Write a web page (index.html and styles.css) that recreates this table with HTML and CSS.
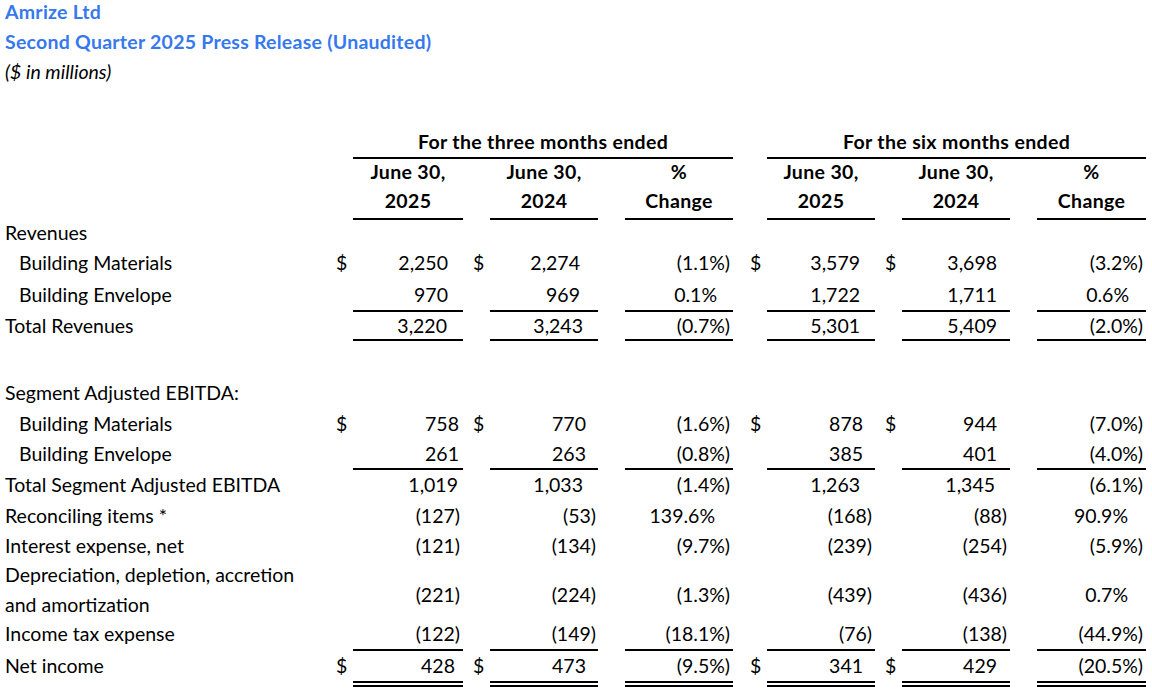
FILE: index.html
```html
<!DOCTYPE html>
<html lang="en">
<head>
<meta charset="utf-8">
<title>Amrize Ltd – Second Quarter 2025</title>
<link rel="stylesheet" href="styles.css">
</head>
<body>
<div class="titles">
  <div class="title">Amrize Ltd</div>
  <div class="title">Second Quarter 2025 Press Release (Unaudited)</div>
  <div class="note">($ in millions)</div>
</div>
<table class="fin">
  <colgroup>
    <col class="c-label"><col class="c-cur"><col class="c-a"><col class="c-cur"><col class="c-v"><col class="c-cur"><col class="c-v"><col class="c-cur3"><col class="c-v"><col class="c-cur"><col class="c-v"><col class="c-cur"><col class="c-f">
  </colgroup>
  <thead>
    <tr class="ul h-1">
      <td></td><td></td><th colspan="5" class="v grp">For the three months ended</th><td></td><th colspan="5" class="v grp">For the six months ended</th>
    </tr>
    <tr class="h-2">
      <td></td><td></td><th>June 30,</th><td></td><th>June 30,</th><td></td><th>%</th><td></td><th>June 30,</th><td></td><th>June 30,</th><td></td><th>%</th>
    </tr>
    <tr class="ul h-3">
      <td></td><td></td><th class="v">2025</th><td></td><th class="v">2024</th><td></td><th class="v">Change</th><td></td><th class="v">2025</th><td></td><th class="v">2024</th><td></td><th class="v">Change</th>
    </tr>
  </thead>
  <tbody>
    <tr class="r-rev">
      <td class="lbl" colspan="13">Revenues</td>
    </tr>
    <tr class="r-bm">
      <td class="lbl ind">Building Materials</td><td class="cur">$</td><td class="v r15">2,250</td><td class="cur">$</td><td class="v r18">2,274</td><td></td><td class="v r3">(1.1%)</td><td class="cur cur3">$</td><td class="v r15">3,579</td><td class="cur">$</td><td class="v r13">3,698</td><td></td><td class="v r3">(3.2%)</td>
    </tr>
    <tr class="ul r-be">
      <td class="lbl ind">Building Envelope</td><td></td><td class="v r15">970</td><td></td><td class="v r18">969</td><td></td><td class="v r16">0.1%</td><td></td><td class="v r15">1,722</td><td></td><td class="v r13">1,711</td><td></td><td class="v r17">0.6%</td>
    </tr>
    <tr class="ul r-tr">
      <td class="lbl">Total Revenues</td><td></td><td class="v r16">3,220</td><td></td><td class="v r15">3,243</td><td></td><td class="v r3">(0.7%)</td><td></td><td class="v r15">5,301</td><td></td><td class="v r13">5,409</td><td></td><td class="v r3">(2.0%)</td>
    </tr>
    <tr class="r-blank"><td colspan="13"></td></tr>
    <tr class="r-seg">
      <td class="lbl" colspan="13">Segment Adjusted EBITDA:</td>
    </tr>
    <tr class="r-sbm">
      <td class="lbl ind">Building Materials</td><td class="cur">$</td><td class="v r4">758</td><td class="cur">$</td><td class="v r12">770</td><td></td><td class="v r3">(1.6%)</td><td class="cur cur3">$</td><td class="v r12">878</td><td class="cur">$</td><td class="v r13">944</td><td></td><td class="v r3">(7.0%)</td>
    </tr>
    <tr class="ul r-sbe">
      <td class="lbl ind">Building Envelope</td><td></td><td class="v r4">261</td><td></td><td class="v r12">263</td><td></td><td class="v r3">(0.8%)</td><td></td><td class="v r12">385</td><td></td><td class="v r13">401</td><td></td><td class="v r3">(4.0%)</td>
    </tr>
    <tr class="r-tot">
      <td class="lbl">Total Segment Adjusted EBITDA</td><td></td><td class="v r5">1,019</td><td></td><td class="v r15">1,033</td><td></td><td class="v r3">(1.4%)</td><td></td><td class="v r15">1,263</td><td></td><td class="v r15">1,345</td><td></td><td class="v r3">(6.1%)</td>
    </tr>
    <tr class="r-rec">
      <td class="lbl">Reconciling items *</td><td></td><td class="v r3">(127)</td><td></td><td class="v r2">(53)</td><td></td><td class="v r18">139.6%</td><td></td><td class="v r3">(168)</td><td></td><td class="v r3">(88)</td><td></td><td class="v r18">90.9%</td>
    </tr>
    <tr class="r-int">
      <td class="lbl">Interest expense, net</td><td></td><td class="v r3">(121)</td><td></td><td class="v r2">(134)</td><td></td><td class="v r3">(9.7%)</td><td></td><td class="v r3">(239)</td><td></td><td class="v r3">(254)</td><td></td><td class="v r3">(5.9%)</td>
    </tr>
    <tr class="r-dep">
      <td class="lbl two">Depreciation, depletion, accretion<br>and amortization</td><td></td><td class="v r3 low">(221)</td><td></td><td class="v r2 low">(224)</td><td></td><td class="v r3 low">(1.3%)</td><td></td><td class="v r3 low">(439)</td><td></td><td class="v r3 low">(436)</td><td></td><td class="v r18 low">0.7%</td>
    </tr>
    <tr class="ul r-tax">
      <td class="lbl">Income tax expense</td><td></td><td class="v r3">(122)</td><td></td><td class="v r2">(149)</td><td></td><td class="v r3">(18.1%)</td><td></td><td class="v r3">(76)</td><td></td><td class="v r3">(138)</td><td></td><td class="v r3">(44.9%)</td>
    </tr>
    <tr class="dbl r-net">
      <td class="lbl">Net income</td><td class="cur">$</td><td class="v r8">428</td><td class="cur">$</td><td class="v r12">473</td><td></td><td class="v r3">(9.5%)</td><td class="cur cur3">$</td><td class="v r12">341</td><td class="cur">$</td><td class="v r13">429</td><td></td><td class="v r3">(20.5%)</td>
    </tr>
  </tbody>
</table>
</body>
</html>
```

FILE: styles.css
```css
html, body {
  margin: 0;
  padding: 0;
  background: #ffffff;
  color: #000000;
  font-family: Lato, "Liberation Sans", sans-serif;
  font-size: 19.5px;
}

.titles {
  margin-top: -3px;
  padding-left: 5px;
  line-height: 30px;
}

.title {
  color: #3678ee;
  font-weight: 700;
  letter-spacing: 0.25px;
}

.note {
  font-style: italic;
}

.fin {
  margin-top: 39px;
  border-collapse: separate;
  border-spacing: 0;
  table-layout: fixed;
  width: 1146px;
}

.c-label { width: 326px; }
.c-cur { width: 27px; }
.c-cur3 { width: 34px; }
.c-a { width: 110px; }
.c-v { width: 108px; }
.c-f { width: 109px; }

.fin td,
.fin th {
  padding: 0;
  line-height: 24px;
  vertical-align: middle;
  white-space: nowrap;
  font-weight: 400;
}

.fin .v { text-align: right; }

.fin th,
.fin th.v {
  font-weight: 700;
  text-align: center;
  letter-spacing: 0.35px;
}

.fin .ul > td,
.fin .ul > th {
  border-bottom: 2px solid transparent;
}

.fin .ul > .v {
  border-bottom-color: #000000;
}

.fin .dbl > td {
  border-bottom: 6px double transparent;
}

.fin .dbl > .v {
  border-bottom-color: #000000;
}

.fin .lbl {
  padding-left: 5px;
  text-align: left;
}

.fin .lbl.ind {
  padding-left: 19px;
}

.fin .lbl.two {
  line-height: 29.5px;
}

.fin .cur {
  padding-left: 10px;
  text-align: left;
}

.fin .cur.cur3 {
  padding-left: 17px;
}

.fin .low { padding-top: 10px; }

.fin .r2 { padding-right: 2px; }
.fin .r3 { padding-right: 3px; }
.fin .r4 { padding-right: 4px; }
.fin .r5 { padding-right: 5px; }
.fin .r8 { padding-right: 8px; }
.fin .r12 { padding-right: 12px; }
.fin .r13 { padding-right: 13px; }
.fin .r15 { padding-right: 15px; }
.fin .r16 { padding-right: 16px; }
.fin .r17 { padding-right: 17px; }
.fin .r18 { padding-right: 18px; }

.h-1 { height: 33px; }
.h-2 { height: 25px; }
.h-3 { height: 36px; }
.r-rev { height: 26px; }
.r-bm { height: 34px; }
.r-be { height: 32px; }
.r-tr { height: 29px; }
.r-blank { height: 37px; }
.r-seg { height: 30px; }
.r-sbm { height: 32px; }
.r-sbe { height: 30px; }
.r-tot { height: 30px; }
.r-rec { height: 32px; }
.r-int { height: 28px; }
.r-dep { height: 59px; }
.r-tax { height: 32px; }
.r-net { height: 36px; }
```
